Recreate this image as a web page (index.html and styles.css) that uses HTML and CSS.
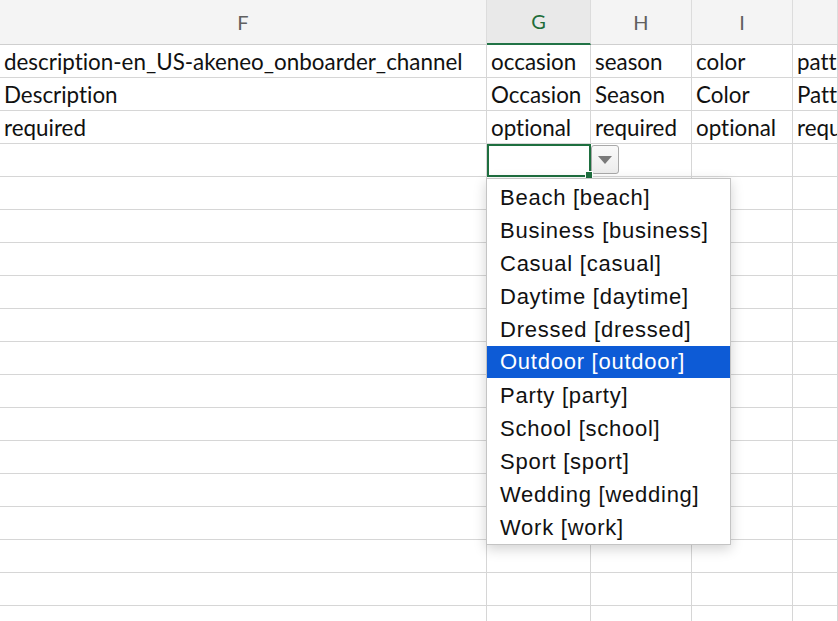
FILE: index.html
```html
<!DOCTYPE html>
<html>
<head>
<meta charset="utf-8">
<link rel="stylesheet" href="styles.css">
</head>
<body>
<div class="sheet">
  <div class="grid">
    <div class="hdr">F</div>
    <div class="hdr hdr-active">G</div>
    <div class="hdr">H</div>
    <div class="hdr">I</div>
    <div class="hdr"></div>

    <div class="cell">description-en_US-akeneo_onboarder_channel</div>
    <div class="cell">occasion</div>
    <div class="cell">season</div>
    <div class="cell">color</div>
    <div class="cell">patt</div>

    <div class="cell">Description</div>
    <div class="cell">Occasion</div>
    <div class="cell">Season</div>
    <div class="cell">Color</div>
    <div class="cell">Patt</div>

    <div class="cell">required</div>
    <div class="cell">optional</div>
    <div class="cell">required</div>
    <div class="cell">optional</div>
    <div class="cell">requ</div>

    <div class="cell"></div>
    <div class="cell cell-selected"><span class="fill-handle"></span></div>
    <div class="cell"><span class="dd-btn"><span class="dd-arrow"></span></span></div>
    <div class="cell"></div>
    <div class="cell"></div>

    <div class="cell"></div><div class="cell"></div><div class="cell"></div><div class="cell"></div><div class="cell"></div>
    <div class="cell"></div><div class="cell"></div><div class="cell"></div><div class="cell"></div><div class="cell"></div>
    <div class="cell"></div><div class="cell"></div><div class="cell"></div><div class="cell"></div><div class="cell"></div>
    <div class="cell"></div><div class="cell"></div><div class="cell"></div><div class="cell"></div><div class="cell"></div>
    <div class="cell"></div><div class="cell"></div><div class="cell"></div><div class="cell"></div><div class="cell"></div>
    <div class="cell"></div><div class="cell"></div><div class="cell"></div><div class="cell"></div><div class="cell"></div>
    <div class="cell"></div><div class="cell"></div><div class="cell"></div><div class="cell"></div><div class="cell"></div>
    <div class="cell"></div><div class="cell"></div><div class="cell"></div><div class="cell"></div><div class="cell"></div>
    <div class="cell"></div><div class="cell"></div><div class="cell"></div><div class="cell"></div><div class="cell"></div>
    <div class="cell"></div><div class="cell"></div><div class="cell"></div><div class="cell"></div><div class="cell"></div>
    <div class="cell"></div><div class="cell"></div><div class="cell"></div><div class="cell"></div><div class="cell"></div>
    <div class="cell"></div><div class="cell"></div><div class="cell"></div><div class="cell"></div><div class="cell"></div>
    <div class="cell"></div><div class="cell"></div><div class="cell"></div><div class="cell"></div><div class="cell"></div>
    <div class="cell"></div><div class="cell"></div><div class="cell"></div><div class="cell"></div><div class="cell"></div>
  </div>

  <ul class="dropdown">
    <li>Beach [beach]</li>
    <li>Business [business]</li>
    <li>Casual [casual]</li>
    <li>Daytime [daytime]</li>
    <li>Dressed [dressed]</li>
    <li class="active">Outdoor [outdoor]</li>
    <li>Party [party]</li>
    <li>School [school]</li>
    <li>Sport [sport]</li>
    <li>Wedding [wedding]</li>
    <li>Work [work]</li>
  </ul>
</div>
</body>
</html>
```

FILE: styles.css
```css
html, body {
  margin: 0;
  padding: 0;
  background: #ffffff;
  overflow: hidden;
}

.sheet {
  position: relative;
  width: 838px;
  height: 621px;
  overflow: hidden;
}

.grid {
  display: grid;
  grid-template-columns: 487px 104px 101px 101px 1fr;
  grid-template-rows: 45px;
  grid-auto-rows: 33px;
}

.hdr {
  box-sizing: border-box;
  background: #f4f4f4;
  border-right: 1px solid #dcdcdc;
  border-bottom: 1px solid #cfcfcf;
  display: flex;
  align-items: center;
  justify-content: center;
  font-family: "Lato", "Liberation Sans", sans-serif;
  font-weight: 400;
  font-size: 20px;
  color: #606060;
  padding-bottom: 1px;
}

.hdr-active {
  background: #e9e9e9;
  color: #1f6d3a;
  border-bottom: 2px solid #217346;
}

.cell {
  position: relative;
  box-sizing: border-box;
  border-right: 1px solid #d6d6d6;
  border-bottom: 1px solid #d6d6d6;
  padding: 0 4px;
  display: flex;
  align-items: center;
  font-family: "Lato", "Liberation Sans", sans-serif;
  font-size: 22.4px;
  font-variant-ligatures: none;
  color: #111;
  white-space: nowrap;
  overflow: hidden;
}

.cell-selected {
  overflow: visible;
  outline: 2px solid #1e6f3f;
  outline-offset: -2px;
  z-index: 2;
}

.fill-handle {
  position: absolute;
  right: -3px;
  bottom: -3px;
  width: 6px;
  height: 6px;
  background: #1e6f3f;
  border: 1px solid #fff;
  box-sizing: content-box;
}

.dd-btn {
  position: absolute;
  left: 0;
  top: 1px;
  width: 28px;
  height: 29px;
  box-sizing: border-box;
  border: 1px solid #a9a9a9;
  border-radius: 3px;
  background: linear-gradient(#fafafa, #ececec);
  display: flex;
  align-items: center;
  justify-content: center;
}

.dd-arrow {
  width: 0;
  height: 0;
  border-left: 7px solid transparent;
  border-right: 7px solid transparent;
  border-top: 8px solid #7a7a7a;
  margin-top: 1px;
}

.dropdown {
  position: absolute;
  left: 486px;
  top: 178px;
  width: 245px;
  margin: 0;
  padding: 2px 0 0 0;
  list-style: none;
  box-sizing: border-box;
  background: #fff;
  border: 1px solid #c4c4c4;
  box-shadow: 0 4px 12px rgba(0, 0, 0, 0.18);
  z-index: 5;
}

.dropdown li {
  height: 33px;
  line-height: 33px;
  padding-left: 13px;
  font-family: "Liberation Sans", Arial, sans-serif;
  font-size: 22px;
  letter-spacing: 0.75px;
  color: #111;
  white-space: nowrap;
}

.dropdown li.active {
  background: #0d5bd6;
  color: #fff;
  height: 32px;
  line-height: 32px;
  margin-bottom: 1px;
}
```
